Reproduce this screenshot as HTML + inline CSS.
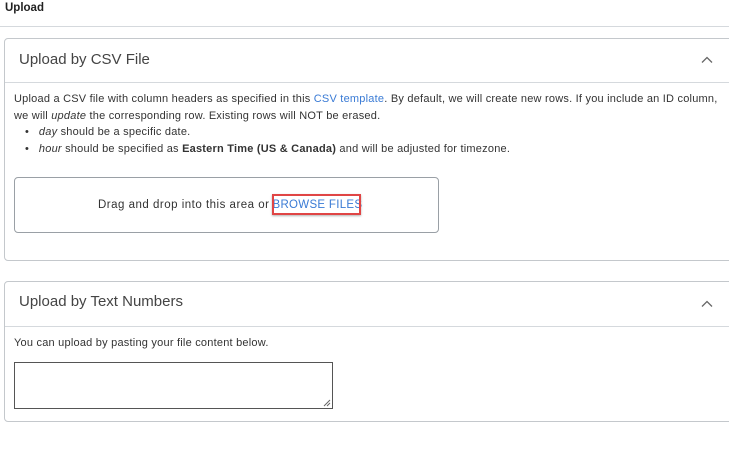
<!DOCTYPE html>
<html><head><style>
body{margin:0;width:729px;height:450px;background:#fff;font-family:"Liberation Sans",sans-serif;color:#333;position:relative;overflow:hidden}
.a{position:absolute}
.card{position:absolute;left:4px;width:740px;border:1px solid #c4c8cc;border-radius:4px;box-sizing:border-box}
.h{position:absolute;left:14px;font-size:15px;color:#444}
.div{position:absolute;left:0;right:0;height:1px;background:#d5d9dd}
.t{position:absolute;font-size:11px;letter-spacing:.22px;white-space:nowrap;color:#333}
.chev{position:absolute;left:696px;width:12px;height:8px}
a{color:#3a7bd5;text-decoration:none}
</style></head><body>
<div class="a" style="left:5px;top:2px;font-size:11.5px;font-weight:bold;color:#222">Upload</div>
<div class="a" style="left:0;right:0;top:26px;height:1px;background:#d5d9dd"></div>

<div class="card" style="top:38px;height:223px">
 <div class="h" style="top:12px">Upload by CSV File</div>
 <svg class="chev" style="top:17px" viewBox="0 0 12 8"><path d="M1 6.5L6 1.5L11 6.5" fill="none" stroke="#666" stroke-width="1.3"/></svg>
 <div class="div" style="top:43px"></div>
 <div class="t" style="left:9px;top:54px">Upload a CSV file with column headers as specified in this <a>CSV template</a>. By default, we will create new rows. If you include an ID column,</div>
 <div class="t" style="left:9px;top:71px">we will <i>update</i> the corresponding row. Existing rows will NOT be erased.</div>
 <div class="t" style="left:20px;top:87px">•&nbsp;&nbsp; <i>day</i> should be a specific date.</div>
 <div class="t" style="left:20px;top:104px">•&nbsp;&nbsp; <i>hour</i> should be specified as <b>Eastern Time (US &amp; Canada)</b> and will be adjusted for timezone.</div>
 <div class="a" style="left:9px;top:138px;width:425px;height:56px;border:1px solid #9aa0a6;border-radius:4px;box-sizing:border-box"></div>
 <div class="t" style="left:93px;top:160px;font-size:11.5px;letter-spacing:.5px">Drag and drop into this area or<span style="color:#3a7bd5;margin-left:3px;letter-spacing:.3px">BROWSE FILES</span></div>
 <div class="a" style="left:267px;top:155px;width:89px;height:21px;border:2px solid #e04545;box-sizing:border-box;box-shadow:0 1px 2px rgba(0,0,0,.3)"></div>
</div>

<div class="card" style="top:281px;height:141px">
 <div class="h" style="top:11px">Upload by Text Numbers</div>
 <svg class="chev" style="top:18px" viewBox="0 0 12 8"><path d="M1 6.5L6 1.5L11 6.5" fill="none" stroke="#666" stroke-width="1.3"/></svg>
 <div class="div" style="top:44px"></div>
 <div class="t" style="left:9px;top:55px">You can upload by pasting your file content below.</div>
 <div class="a" style="left:9px;top:80px;width:319px;height:47px;border:1px solid #555;box-sizing:border-box"></div>
 <svg class="a" style="left:317px;top:116px" width="9" height="9" viewBox="0 0 9 9"><path d="M8 2L2 8M8 5L5 8" stroke="#666" stroke-width="1"/></svg>
</div>
</body></html>
